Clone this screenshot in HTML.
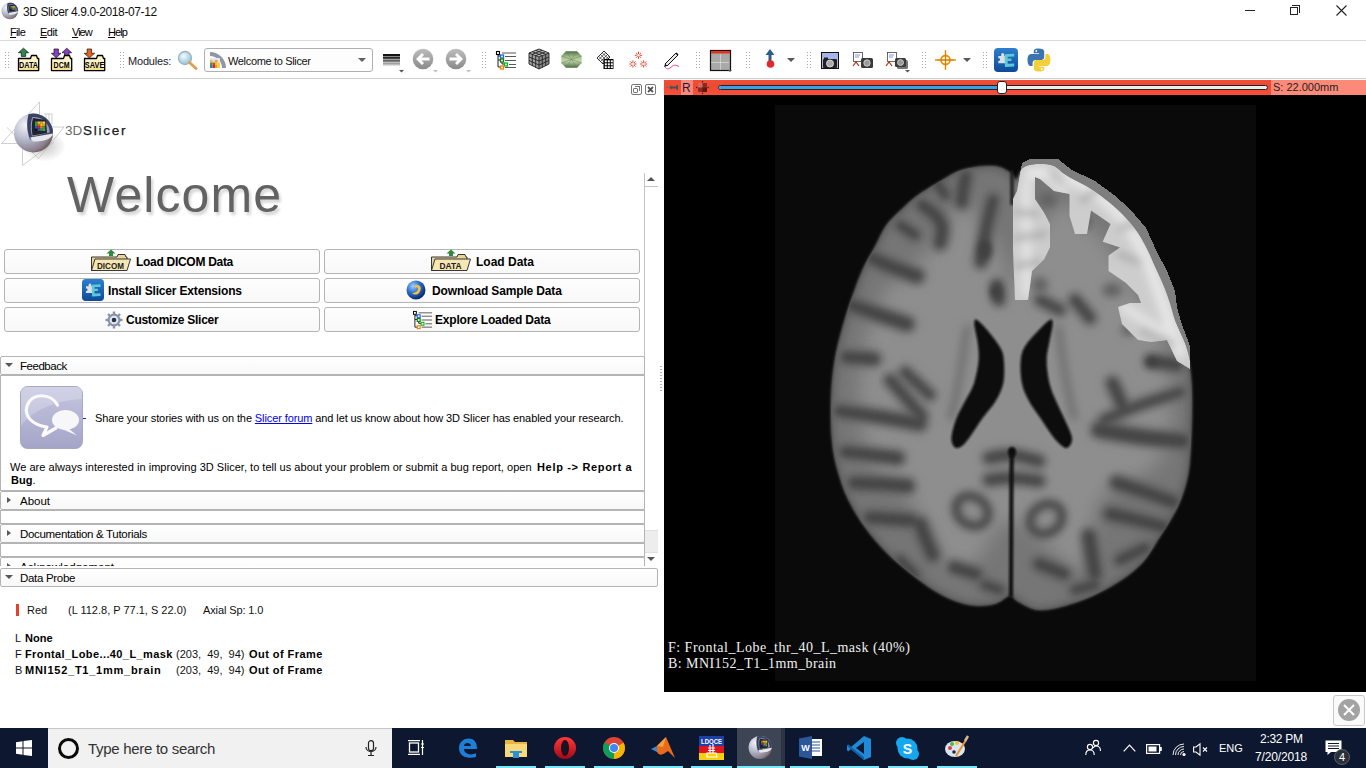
<!DOCTYPE html>
<html><head><meta charset="utf-8">
<style>
*{margin:0;padding:0;box-sizing:border-box}
html,body{width:1366px;height:768px;overflow:hidden;background:#fff;font-family:"Liberation Sans",sans-serif;color:#000;position:relative}
.a{position:absolute}
.t{position:absolute;white-space:nowrap;line-height:1}
svg{position:absolute;overflow:visible}
.hl{position:absolute;height:1px;background:#d9d9d9}
.grip{position:absolute;width:6px;height:18px;background-image:radial-gradient(circle,#a8a8a8 0.65px,transparent 1px);background-size:3px 3px}
.btn{position:absolute;height:25px;border:1px solid #b4b4b4;border-radius:3px;background:linear-gradient(#fefefe,#f8f8f8)}
.bt{position:absolute;white-space:nowrap;line-height:1;font-weight:bold;font-size:12px;top:7px}
.sh{position:absolute;left:0;width:645px;border:1px solid #b4b4b4;border-radius:2px;background:linear-gradient(#fff,#f8f8f8)}
.sb{position:absolute;left:0;width:645px;border:1px solid #b4b4b4;background:#fff}
.st{position:absolute;white-space:nowrap;line-height:1;font-size:11.5px;left:19px}
.tri-d{position:absolute;width:0;height:0;border-left:4px solid transparent;border-right:4px solid transparent;border-top:4px solid #585858}
.tri-r{position:absolute;width:0;height:0;border-top:3px solid transparent;border-bottom:3px solid transparent;border-left:4px solid #585858}
.tb{position:absolute;top:728px;height:40px}
.ul{position:absolute;top:766px;height:2px;background:#7ae6fa}
</style></head>
<body>
<!-- ============ TITLE BAR ============ -->
<svg style="left:1px;top:2px" width="18" height="18" viewBox="0 0 18 18"><use href="#slc" x="0" y="0" width="18" height="18"/></svg>
<div class="t" style="left:23px;top:6px;font-size:12px;color:#111;letter-spacing:-0.4px">3D Slicer 4.9.0-2018-07-12</div>
<div class="t" style="left:10px;top:27px;font-size:11px;letter-spacing:-0.65px"><u>F</u>ile</div>
<div class="t" style="left:40px;top:27px;font-size:11px;letter-spacing:-0.5px"><u>E</u>dit</div>
<div class="t" style="left:72px;top:27px;font-size:11px;letter-spacing:-1px"><u>V</u>iew</div>
<div class="t" style="left:108px;top:27px;font-size:11px;letter-spacing:-0.9px"><u>H</u>elp</div>
<!-- window controls -->
<div class="a" style="left:1245px;top:10px;width:10px;height:1px;background:#222"></div>
<div class="a" style="left:1290px;top:7px;width:8px;height:8px;border:1px solid #222"></div>
<div class="a" style="left:1292px;top:5px;width:8px;height:8px;border-top:1px solid #222;border-right:1px solid #222"></div>
<svg style="left:1336px;top:5px" width="11" height="11" viewBox="0 0 11 11"><path d="M0.5 0.5 L10.5 10.5 M10.5 0.5 L0.5 10.5" stroke="#222" stroke-width="1.1"/></svg>
<div class="hl" style="left:0;top:40px;width:1366px;background:#dadada"></div>

<!-- ============ TOOLBAR ============ -->
<div class="grip" style="left:4px;top:51px"></div>
<!-- DATA icon -->
<svg style="left:17px;top:47px" width="24" height="25" viewBox="0 0 24 25">
 <path d="M6.5 1.2 L11.6 5.7 L8.7 5.7 L8.7 9.4 L4.3 9.4 L4.3 5.7 L1.4 5.7 Z" fill="#2e8a4a" stroke="#111" stroke-width="0.7"/>
 <path d="M1.5 11.5 L13.5 11.5 L14.5 8.5 L19.5 8.5 L20.5 11.5 L21.7 11.5 L21.7 23.5 L1.5 23.5 Z" fill="#fdf3c4" stroke="#000" stroke-width="1.3" stroke-linejoin="round"/><rect x="2.2" y="20" width="18.8" height="2.9" fill="#f3e090"/><text x="11.6" y="21.2" font-family="Liberation Sans" font-size="8.6" font-weight="bold" text-anchor="middle" fill="#000" textLength="19" lengthAdjust="spacingAndGlyphs">DATA</text>
</svg>
<svg style="left:50px;top:47px" width="24" height="25" viewBox="0 0 24 25">
 <path d="M6.2 10.8 L11.0 6.3 L8.4 6.3 L8.4 2.0 L4.0 2.0 L4.0 6.3 L1.4 6.3 Z" fill="#8a3fc0" stroke="#111" stroke-width="0.7"/>
 <path d="M16.8 1.2 L21.6 5.7 L19.0 5.7 L19.0 8.5 L14.6 8.5 L14.6 5.7 L12.0 5.7 Z" fill="#8a3fc0" stroke="#111" stroke-width="0.7"/>
 <path d="M1.5 11.5 L13.5 11.5 L14.5 8.5 L19.5 8.5 L20.5 11.5 L21.7 11.5 L21.7 23.5 L1.5 23.5 Z" fill="#fdf3c4" stroke="#000" stroke-width="1.3" stroke-linejoin="round"/><rect x="2.2" y="20" width="18.8" height="2.9" fill="#f3e090"/><text x="11.6" y="21.2" font-family="Liberation Sans" font-size="8.6" font-weight="bold" text-anchor="middle" fill="#000" textLength="16" lengthAdjust="spacingAndGlyphs">DCM</text>
</svg>
<svg style="left:83px;top:47px" width="24" height="25" viewBox="0 0 24 25">
 <path d="M6.4 10.8 L11.6 6.3 L8.6 6.3 L8.6 2.0 L4.2 2.0 L4.2 6.3 L1.2 6.3 Z" fill="#e8601e" stroke="#111" stroke-width="0.7"/>
 <path d="M1.5 11.5 L13.5 11.5 L14.5 8.5 L19.5 8.5 L20.5 11.5 L21.7 11.5 L21.7 23.5 L1.5 23.5 Z" fill="#fdf3c4" stroke="#000" stroke-width="1.3" stroke-linejoin="round"/><rect x="2.2" y="20" width="18.8" height="2.9" fill="#f3e090"/><text x="11.6" y="21.2" font-family="Liberation Sans" font-size="8.6" font-weight="bold" text-anchor="middle" fill="#000" textLength="19.5" lengthAdjust="spacingAndGlyphs">SAVE</text>
</svg>
<div class="grip" style="left:119px;top:51px"></div>
<div class="t" style="left:128px;top:56px;font-size:11px;color:#1a1a2a;letter-spacing:-0.2px">Modules:</div>
<!-- magnifier -->
<svg style="left:177px;top:50px" width="21" height="20" viewBox="0 0 21 20">
 <defs><radialGradient id="mg" cx="40%" cy="35%" r="60%"><stop offset="0" stop-color="#f4fbff"/><stop offset="1" stop-color="#9cc8dc"/></radialGradient></defs>
 <circle cx="8" cy="8" r="6.5" fill="url(#mg)" stroke="#9ab4c0" stroke-width="1.3"/>
 <path d="M12.5 12.5 L19 18.5" stroke="#e0a050" stroke-width="3" stroke-linecap="round"/>
</svg>
<!-- module combo -->
<div class="a" style="left:204px;top:48px;width:169px;height:24px;border:1px solid #b0b0b0;border-radius:3px;background:#fdfdfd"></div>
<svg style="left:210px;top:52px" width="16" height="16" viewBox="0 0 16 16">
 <path d="M0 0 A16 16 0 0 1 16 16 L12 16 A12 12 0 0 0 0 4 Z" fill="#8e96a8"/>
 <rect x="0" y="6" width="10" height="10" fill="#e8e8e8"/>
 <rect x="0" y="8" width="2.5" height="2.5" fill="#e8c040"/><rect x="2.5" y="8" width="2.5" height="2.5" fill="#d8d8d8"/><rect x="5" y="8" width="2.5" height="2.5" fill="#e8a040"/>
 <rect x="0" y="10.5" width="2.5" height="2.5" fill="#40a040"/><rect x="2.5" y="10.5" width="2.5" height="2.5" fill="#e04030"/><rect x="5" y="10.5" width="2.5" height="2.5" fill="#f0c030"/>
 <rect x="0" y="13" width="2.5" height="3" fill="#3080d0"/><rect x="2.5" y="13" width="2.5" height="3" fill="#d03030"/><rect x="5" y="13" width="2.5" height="3" fill="#e0a020"/><rect x="7.5" y="10.5" width="2.5" height="5.5" fill="#f0d040"/>
</svg>
<div class="t" style="left:228px;top:56px;font-size:11px;color:#111;letter-spacing:-0.34px">Welcome to Slicer</div>
<div class="tri-d" style="left:358px;top:58px;border-left-width:4px;border-right-width:4px;border-top-width:4px;border-top-color:#606060"></div>
<!-- window level -->
<svg style="left:383px;top:54px" width="22" height="19" viewBox="0 0 22 19">
 <rect x="0" y="0" width="17" height="1.5" fill="rgb(20,20,20)"/><rect x="0" y="1" width="17" height="1.5" fill="rgb(20,20,20)"/><rect x="0" y="3" width="17" height="1.5" fill="rgb(40,40,40)"/><rect x="0" y="4" width="17" height="1.5" fill="rgb(70,70,70)"/><rect x="0" y="6" width="17" height="1.5" fill="rgb(100,100,100)"/><rect x="0" y="7" width="17" height="1.5" fill="rgb(130,130,130)"/><rect x="0" y="9" width="17" height="1.5" fill="rgb(160,160,160)"/><rect x="0" y="10" width="17" height="1.5" fill="rgb(190,190,190)"/>
 <path d="M16 16 L21 16 L18.5 18.5 Z" fill="#555"/>
</svg>
<!-- back / forward -->
<svg style="left:412px;top:48px" width="28" height="25" viewBox="0 0 28 25">
 <defs><linearGradient id="cg" x1="0" y1="0" x2="0" y2="1"><stop offset="0" stop-color="#bdbdbd"/><stop offset="1" stop-color="#8a8a8a"/></linearGradient></defs>
 <circle cx="11" cy="11" r="10.3" fill="url(#cg)"/>
 <path d="M4 11 L10 5 L12 7 L9.5 9.5 L17.5 9.5 L17.5 12.5 L9.5 12.5 L12 15 L10 17 Z" fill="#fff"/>
 <path d="M21 22 L26 22 L23.5 24.5 Z" fill="#c0c0c0"/>
</svg>
<svg style="left:445px;top:48px" width="28" height="25" viewBox="0 0 28 25">
 <circle cx="11" cy="11" r="10.3" fill="url(#cg)"/>
 <path d="M18 11 L12 5 L10 7 L12.5 9.5 L4.5 9.5 L4.5 12.5 L12.5 12.5 L10 15 L12 17 Z" fill="#fff"/>
 <path d="M21 22 L26 22 L23.5 24.5 Z" fill="#c0c0c0"/>
</svg>
<div class="grip" style="left:481px;top:51px"></div>
<!-- tree -->
<svg style="left:496px;top:51px" width="21" height="19" viewBox="0 0 21 19">
 <path d="M2 2 L2 16 L4.5 16 M2 5 L4.5 5 M2 9 L4.5 9 M6 9 L6 13 L8.5 13" stroke="#222" stroke-width="1" fill="none"/>
 <rect x="0.5" y="0.5" width="3" height="3" fill="#fff" stroke="#000" stroke-width="1.1"/>
 <rect x="4.5" y="4" width="3" height="3" fill="#fff" stroke="#1a6ae0" stroke-width="1.3"/>
 <rect x="4.5" y="8" width="3" height="3" fill="#fff" stroke="#137a13" stroke-width="1.3"/>
 <rect x="8.5" y="12" width="3" height="3" fill="#fff" stroke="#1bb31b" stroke-width="1.3"/>
 <rect x="4.5" y="15" width="3" height="3" fill="#fff" stroke="#f08010" stroke-width="1.3"/>
 <path d="M6 2 L20 2 M9 5.5 L20 5.5 M9 9.5 L20 9.5 M13 13.5 L20 13.5 M9 16.5 L20 16.5" stroke="#444" stroke-width="0.9"/>
</svg>
<!-- cube -->
<svg style="left:528px;top:48px" width="22" height="22" viewBox="0 0 22 22">
 <path d="M11 1 L21 5 L11 9 L1 5 Z" fill="#b8b8b8"/>
 <path d="M1 5 L11 9 L11 21 L1 16 Z" fill="#a0a0a0"/>
 <path d="M21 5 L11 9 L11 21 L21 16 Z" fill="#8a8a8a"/>
 <path d="M4.3 3.7 L14.3 7.7 M7.7 2.3 L17.7 6.3 M17.7 3.7 L7.7 7.7 M14.3 2.3 L4.3 6.3 M1 9 L11 13 L21 9 M1 12.5 L11 17 L21 12.5 M4.3 6.3 L4.3 18 M7.7 7.7 L7.7 19.5 M14.3 7.7 L14.3 19.5 M17.7 6.3 L17.7 18" stroke="#222" stroke-width="0.9" fill="none"/>
 <path d="M1 5 L11 9 L21 5 M11 9 L11 21 M1 5 L1 16 L11 21 L21 16 L21 5 L11 1 Z" stroke="#222" stroke-width="0.9" fill="none"/>
</svg>
<!-- gem -->
<svg style="left:561px;top:51px" width="21" height="17" viewBox="0 0 21 17">
 <defs><linearGradient id="gm" x1="0" y1="0" x2="0" y2="1"><stop offset="0" stop-color="#4f6e44"/><stop offset="0.35" stop-color="#a8c290"/><stop offset="0.6" stop-color="#c0d6a8"/><stop offset="1" stop-color="#4a6a40"/></linearGradient></defs>
 <path d="M5 0.3 L16 0.3 L20.7 5 L20.7 12 L16 16.7 L5 16.7 L0.3 12 L0.3 5 Z" fill="url(#gm)"/>
 <path d="M5 0.3 L10.5 8.5 L16 0.3 M0.3 5 L10.5 8.5 L20.7 5 M0.3 12 L10.5 8.5 L20.7 12 M5 16.7 L10.5 8.5 L16 16.7" stroke="#6e8a60" stroke-width="0.6" fill="none"/>
</svg>
<!-- grid -->
<svg style="left:596px;top:50px" width="19" height="20" viewBox="0 0 19 20">
 <path d="M1 8 L8 1 L14 7 L7 14 Z" fill="#fff" stroke="#000" stroke-width="0.8"/>
 <path d="M2.7 6.3 L9.7 13.3 M4.5 4.5 L11.5 11.5 M6.2 2.8 L13 9.5 M2.7 9.7 L9.7 2.7 M4.5 11.5 L11.5 4.5 M6.2 13.2 L13 6.2" stroke="#000" stroke-width="0.6"/>
 <rect x="7.5" y="9" width="10" height="10" fill="#000"/>
 <rect x="8.8" y="10.3" width="2" height="2" fill="#fff"/><rect x="11.8" y="10.3" width="2" height="2" fill="#fff"/><rect x="14.8" y="10.3" width="2" height="2" fill="#fff"/>
 <rect x="8.8" y="13.3" width="2" height="2" fill="#fff"/><rect x="11.8" y="13.3" width="2" height="2" fill="#fff"/><rect x="14.8" y="13.3" width="2" height="2" fill="#fff"/>
 <rect x="8.8" y="16.3" width="2" height="1.8" fill="#fff"/><rect x="11.8" y="16.3" width="2" height="1.8" fill="#fff"/><rect x="14.8" y="16.3" width="2" height="1.8" fill="#fff"/>
</svg>
<!-- fiducials -->
<svg style="left:629px;top:51px" width="19" height="18" viewBox="0 0 19 18">
 <g stroke="#e8301a" stroke-width="0.9" stroke-linecap="butt"><path d="M10.70 4.30 L13.10 4.30 M10.35 5.15 L12.05 6.85 M9.50 5.50 L9.50 7.90 M8.65 5.15 L6.95 6.85 M8.30 4.30 L5.90 4.30 M8.65 3.45 L6.95 1.75 M9.50 3.10 L9.50 0.70 M10.35 3.45 L12.05 1.75 M5.10 13.00 L7.50 13.00 M4.75 13.85 L6.45 15.55 M3.90 14.20 L3.90 16.60 M3.05 13.85 L1.35 15.55 M2.70 13.00 L0.30 13.00 M3.05 12.15 L1.35 10.45 M3.90 11.80 L3.90 9.40 M4.75 12.15 L6.45 10.45 M15.80 13.00 L18.20 13.00 M15.45 13.85 L17.15 15.55 M14.60 14.20 L14.60 16.60 M13.75 13.85 L12.05 15.55 M13.40 13.00 L11.00 13.00 M13.75 12.15 L12.05 10.45 M14.60 11.80 L14.60 9.40 M15.45 12.15 L17.15 10.45 "/></g>
</svg>
<!-- pen -->
<svg style="left:663px;top:51px" width="18" height="19" viewBox="0 0 18 19">
 <path d="M2 13 L13 2 L15 4 L4 15 Z" fill="#e8e8e8" stroke="#111" stroke-width="1"/>
 <path d="M13 2 L15 4" stroke="#111" stroke-width="1.6"/>
 <path d="M1 16 L2 13 L4 15 Z" fill="#111"/>
 <path d="M2 16 C4 19 6 18 9 15.5 C11 13.5 13 14 16 15.5" stroke="#e8406a" stroke-width="0.9" fill="none"/>
</svg>
<div class="grip" style="left:695px;top:51px"></div>
<!-- layout -->
<svg style="left:710px;top:50px" width="23" height="22" viewBox="0 0 23 22">
 <rect x="0.5" y="0.5" width="20" height="20" fill="#a9a9a9" stroke="#111" stroke-width="1.2"/>
 <rect x="1" y="1" width="19" height="2.5" fill="#e8301a"/>
 <path d="M10.5 4.5 L10.5 20 M1.5 12.5 L19.5 12.5" stroke="#f4f0d8" stroke-width="1" stroke-dasharray="1 1"/>
 <path d="M18 20 L22 20 L20 22 Z" fill="#555"/>
</svg>
<div class="grip" style="left:745px;top:51px"></div>
<!-- arrow with red dot -->
<svg style="left:765px;top:49px" width="11" height="20" viewBox="0 0 11 20">
 <path d="M5 0 L9.5 6 L6.5 6 L6.5 12 L3.5 12 L3.5 6 L0.5 6 Z" fill="#2d5b8a"/>
 <circle cx="5.5" cy="15" r="3.8" fill="#e02a2a"/>
</svg>
<div class="tri-d" style="left:787px;top:58px"></div>
<div class="grip" style="left:806px;top:51px"></div>
<!-- camera 1 -->
<svg style="left:821px;top:52px" width="18" height="17" viewBox="0 0 18 17">
 <rect x="0.5" y="0.5" width="17" height="16" fill="#a9b4e8" stroke="#111" stroke-width="1"/>
 <rect x="2" y="7" width="14" height="9" rx="1" fill="#222"/>
 <circle cx="9" cy="11.5" r="3.5" fill="#aaa" stroke="#eee" stroke-width="0.8"/>
 <rect x="3" y="5.5" width="4" height="2" fill="#222"/>
</svg>
<!-- camera 2 -->
<svg style="left:851px;top:52px" width="23" height="17" viewBox="0 0 23 17">
 <rect x="2.5" y="0.5" width="9" height="9" fill="#fff" stroke="#444" stroke-width="0.8"/>
 <path d="M4 3 L9 3 M4 5 L8 5" stroke="#6a7ad0" stroke-width="0.8"/>
 <path d="M2 14 L5 10 L8 14" stroke="#b03010" stroke-width="1.2" fill="none"/>
 <rect x="10" y="6" width="12" height="10" rx="1.5" fill="#3a3a3a"/>
 <circle cx="16" cy="11" r="3.2" fill="#999" stroke="#ddd" stroke-width="0.8"/>
</svg>
<!-- camera 3 -->
<svg style="left:885px;top:52px" width="26" height="21" viewBox="0 0 26 21">
 <rect x="2.5" y="0.5" width="9" height="9" fill="#fff" stroke="#444" stroke-width="0.8"/>
 <path d="M4 3 L9 3 M4 5 L8 5" stroke="#6a7ad0" stroke-width="0.8"/>
 <path d="M1 14 L4 10 L7 14" stroke="#b03010" stroke-width="1.2" fill="none"/>
 <rect x="12" y="8" width="11" height="9" rx="1.5" fill="#777"/>
 <rect x="10" y="6" width="11" height="9" rx="1.5" fill="#3a3a3a"/>
 <circle cx="15.5" cy="10.5" r="3" fill="#999" stroke="#ddd" stroke-width="0.8"/>
 <path d="M20 18 L25 18 L22.5 20.5 Z" fill="#555"/>
</svg>
<div class="grip" style="left:921px;top:51px"></div>
<!-- crosshair -->
<svg style="left:935px;top:50px" width="21" height="20" viewBox="0 0 21 20">
 <path d="M10.5 0 L10.5 20 M0 10 L21 10" stroke="#e8900a" stroke-width="1.4"/>
 <circle cx="10.5" cy="10" r="4.5" fill="none" stroke="#e8900a" stroke-width="1.8"/>
 <path d="M10.5 2 L10.5 18 M2 10 L19 10" stroke="#c87008" stroke-width="0.6"/>
</svg>
<div class="tri-d" style="left:963px;top:58px"></div>
<div class="grip" style="left:982px;top:51px"></div>
<!-- extension manager -->
<svg style="left:994px;top:48px" width="24" height="24" viewBox="0 0 24 24">
 <defs><linearGradient id="ex" x1="0" y1="0" x2="0" y2="1"><stop offset="0" stop-color="#2c7fcf"/><stop offset="1" stop-color="#0d4a97"/></linearGradient></defs>
 <rect x="0" y="0" width="24" height="24" rx="4" fill="url(#ex)"/>
 <path d="M4.3 8 L7.3 8 C6.8 6.5 7.5 5 8.7 5 C10 5 10.5 6.5 10 8 L12 8 L12 15.3 L4.3 15.3 L4.3 13 C5.5 13.2 6 12.5 6 11.6 C6 10.7 5.5 10 4.3 10.3 Z" fill="#dcdfe4"/>
 <path d="M10.5 6.2 L20.2 5.8 L20.2 8.6 L13.7 8.8 L13.7 10.6 L17.4 10.6 L17.4 13 L13.7 13 L13.7 15.8 L20.2 15.6 L20.2 18.6 L11 19 Z" fill="#5cc8d8"/>
</svg>
<!-- python -->
<svg style="left:1027px;top:48px" width="24" height="24" viewBox="0 0 24 24">
 <path d="M11.8 0.5 C6.5 0.5 6.8 2.8 6.8 2.8 L6.8 5.3 L12 5.3 L12 6 L4.2 6 C4.2 6 0.5 5.6 0.5 11.9 C0.5 18.2 3.7 18 3.7 18 L5.6 18 L5.6 15.1 C5.6 15.1 5.5 11.9 8.8 11.9 L14.1 11.9 C14.1 11.9 17.2 12 17.2 8.9 L17.2 3.8 C17.2 3.8 17.7 0.5 11.8 0.5 Z" fill="#3a75b0"/>
 <path d="M12.2 23.5 C17.5 23.5 17.2 21.2 17.2 21.2 L17.2 18.7 L12 18.7 L12 18 L19.8 18 C19.8 18 23.5 18.4 23.5 12.1 C23.5 5.8 20.3 6 20.3 6 L18.4 6 L18.4 8.9 C18.4 8.9 18.5 12.1 15.2 12.1 L9.9 12.1 C9.9 12.1 6.8 12 6.8 15.1 L6.8 20.2 C6.8 20.2 6.3 23.5 12.2 23.5 Z" fill="#f5cf3a"/>
 <circle cx="9.3" cy="3" r="0.9" fill="#fff"/><circle cx="14.7" cy="21" r="0.9" fill="#fff"/>
</svg>

<div class="hl" style="left:0;top:78px;width:1366px;background:#cfcfcf"></div>

<!-- ============ LEFT PANEL ============ -->
<!-- float/close -->
<div class="a" style="left:631px;top:84px;width:11px;height:11px;border:1px solid #777;border-radius:2px"></div>
<div class="a" style="left:633px;top:88px;width:5px;height:5px;border:1px solid #777;border-radius:1px"></div>
<div class="a" style="left:635px;top:86px;width:5px;height:5px;border-top:1px solid #777;border-right:1px solid #777"></div>
<div class="a" style="left:645px;top:84px;width:11px;height:11px;border:1px solid #777;border-radius:2px"></div>
<svg style="left:645px;top:84px" width="11" height="11" viewBox="0 0 11 11"><path d="M3 3 L8 8 M8 3 L3 8" stroke="#555" stroke-width="1.8"/></svg>
<!-- logo -->
<svg style="left:0;top:0" width="0" height="0">
 <defs>
  <radialGradient id="lg1" cx="30%" cy="30%" r="85%"><stop offset="0" stop-color="#f4f4f8"/><stop offset="0.45" stop-color="#b4b6cc"/><stop offset="0.8" stop-color="#8a7e8a"/><stop offset="1" stop-color="#5a3a36"/></radialGradient>
  <radialGradient id="lgs" cx="50%" cy="50%" r="50%"><stop offset="0" stop-color="#000" stop-opacity="0.22"/><stop offset="1" stop-color="#000" stop-opacity="0"/></radialGradient>
  <symbol id="slc" viewBox="13 112 42 42">
   <circle cx="33.5" cy="133" r="19.5" fill="url(#lg1)"/>
   <path d="M28.5 114.2 A19.5 19.5 0 0 1 53 133.5 L30 139.5 C26.5 131 26.5 122 28.5 114.2 Z" fill="#3c4164"/>
   <path d="M32.5 117 A16 16 0 0 1 49.8 132.5 L32 136.5 C30.3 129 30.3 122 32.5 117 Z" fill="#9aa0b8"/>
   <path d="M33 118 L46 120 L47 133 L32.5 135.5 C31.5 129 31.5 123 33 118 Z" fill="#20242e"/>
   <path d="M30 137.5 L53 133.5 C51.5 139 45 141.5 33 141.5 Z" fill="#e6e8ee"/>
   <rect x="35" y="121.5" width="2.6" height="2.4" fill="#38a040"/><rect x="37.6" y="121.5" width="2.6" height="2.4" fill="#f0c020"/><rect x="40.2" y="121.5" width="2.6" height="2.4" fill="#e8b030"/><rect x="42.8" y="121.5" width="2.4" height="2.4" fill="#e8d060"/>
   <rect x="35" y="123.9" width="2.6" height="2.4" fill="#30a040"/><rect x="37.6" y="123.9" width="2.6" height="2.4" fill="#e85020"/><rect x="40.2" y="123.9" width="2.6" height="2.4" fill="#f0c020"/><rect x="42.8" y="123.9" width="2.4" height="2.4" fill="#e89020"/>
   <rect x="35" y="126.3" width="2.6" height="2.4" fill="#2060d0"/><rect x="37.6" y="126.3" width="2.6" height="2.4" fill="#e02020"/><rect x="40.2" y="126.3" width="2.6" height="2.4" fill="#f08020"/><rect x="42.8" y="126.3" width="2.4" height="2.4" fill="#30a040"/>
   <rect x="35" y="128.7" width="2.6" height="2.2" fill="#111"/><rect x="37.6" y="128.7" width="2.6" height="2.2" fill="#1a5ad0"/><rect x="40.2" y="128.7" width="2.6" height="2.2" fill="#30a040"/><rect x="42.8" y="128.7" width="2.4" height="2.2" fill="#40b050"/>
  </symbol>
 </defs>
</svg>
<svg style="left:0px;top:98px" width="70" height="72" viewBox="0 98 70 72">
 <ellipse cx="44" cy="146" rx="22" ry="16" fill="url(#lgs)"/>
 <g stroke="#b0b0b0" stroke-width="0.6" fill="none">
  <path d="M1.5 143.5 L39.5 102 L39.5 117 M7 127.5 L38.5 158.5 L64 127 L52 127 M1.5 143.5 L18 143.5 M22.5 137 L22.5 165.5 L54 142 M44 114 L52 114 L52 124 M46 114 L46 122 M49 114 L49 122"/>
 </g>
 <use href="#slc" x="13" y="112" width="42" height="42"/>
</svg>
<div class="t" style="left:65px;top:124px;font-size:13.5px;color:#6a6a6a;letter-spacing:0px">3D</div><div class="t" style="left:83px;top:124px;font-size:13.5px;color:#1a1a1a;letter-spacing:1.75px;-webkit-text-stroke:0.25px #1a1a1a">Slicer</div>
<div class="t" style="left:67px;top:170px;font-size:50px;letter-spacing:1.1px;color:#626262;text-shadow:2px 3px 3px rgba(0,0,0,0.18)">Welcome</div>

<!-- scrollbar -->
<div class="a" style="left:660px;top:365px;width:2px;height:26px;background-image:radial-gradient(circle,#b0b0b0 0.6px,transparent 0.9px);background-size:2px 3px"></div>
<div class="a" style="left:644px;top:173px;width:1px;height:393px;background:#c4c4c4"></div>
<div class="a" style="left:644px;top:186px;width:14px;height:1px;background:#c4c4c4"></div>
<div class="a" style="left:647px;top:177px;width:0;height:0;border-left:4px solid transparent;border-right:4px solid transparent;border-bottom:4px solid #555"></div>
<div class="a" style="left:645px;top:530px;width:13px;height:23px;background:#ededed;border-top:1px solid #e0e0e0;border-bottom:1px solid #e0e0e0"></div>
<div class="tri-d" style="left:647px;top:557px"></div>

<!-- buttons -->
<div class="btn" style="left:4px;top:249px;width:316px"></div>
<div class="btn" style="left:324px;top:249px;width:316px"></div>
<div class="btn" style="left:4px;top:278px;width:316px"></div>
<div class="btn" style="left:324px;top:278px;width:316px"></div>
<div class="btn" style="left:4px;top:307px;width:316px"></div>
<div class="btn" style="left:324px;top:307px;width:316px"></div>
<!-- dicom icon -->
<svg style="left:90px;top:249px" width="42" height="22" viewBox="0 0 42 22">
 <path d="M21 0.5 L25.5 4.5 L23 4.5 L23 7 L19 7 L19 4.5 L16.5 4.5 Z" fill="#2f8a3e"/>
 <path d="M1.5 21.5 L1.5 8 L27 8 L28 5.5 L35 5.5 L36 8 L37 8 L37 18 Z" fill="#e8d49a" stroke="#222" stroke-width="0.9"/>
 <path d="M5 10 L40.5 10 L37 21.5 L1.5 21.5 Z" fill="#f6e6b4" stroke="#222" stroke-width="0.9"/>
 <text x="20.5" y="19.5" font-family="Liberation Sans" font-size="8.5" font-weight="bold" text-anchor="middle" fill="#222" textLength="27" lengthAdjust="spacingAndGlyphs">DICOM</text>
</svg>
<div class="bt" style="left:136px;top:256px;letter-spacing:-0.29px">Load DICOM Data</div>
<svg style="left:430px;top:249px" width="42" height="22" viewBox="0 0 42 22">
 <path d="M21 0.5 L25.5 4.5 L23 4.5 L23 7 L19 7 L19 4.5 L16.5 4.5 Z" fill="#2f8a3e"/>
 <path d="M1.5 21.5 L1.5 8 L27 8 L28 5.5 L35 5.5 L36 8 L37 8 L37 18 Z" fill="#e8d49a" stroke="#222" stroke-width="0.9"/>
 <path d="M5 10 L40.5 10 L37 21.5 L1.5 21.5 Z" fill="#f6e6b4" stroke="#222" stroke-width="0.9"/>
 <text x="20.5" y="19.5" font-family="Liberation Sans" font-size="8.5" font-weight="bold" text-anchor="middle" fill="#222" textLength="22" lengthAdjust="spacingAndGlyphs">DATA</text>
</svg>
<div class="bt" style="left:476px;top:256px">Load Data</div>
<!-- extension icon -->
<svg style="left:82px;top:279px" width="22" height="22" viewBox="0 0 24 24">
 <rect x="0" y="0" width="24" height="24" rx="4" fill="url(#ex)"/>
 <path d="M4.3 8 L7.3 8 C6.8 6.5 7.5 5 8.7 5 C10 5 10.5 6.5 10 8 L12 8 L12 15.3 L4.3 15.3 L4.3 13 C5.5 13.2 6 12.5 6 11.6 C6 10.7 5.5 10 4.3 10.3 Z" fill="#dcdfe4"/>
 <path d="M10.5 6.2 L20.2 5.8 L20.2 8.6 L13.7 8.8 L13.7 10.6 L17.4 10.6 L17.4 13 L13.7 13 L13.7 15.8 L20.2 15.6 L20.2 18.6 L11 19 Z" fill="#5cc8d8"/>
</svg>
<div class="bt" style="left:108px;top:285px;letter-spacing:-0.17px">Install Slicer Extensions</div>
<!-- globe -->
<svg style="left:406px;top:280px" width="20" height="20" viewBox="0 0 20 20">
 <defs><radialGradient id="gl" cx="35%" cy="30%" r="70%"><stop offset="0" stop-color="#9ad0ff"/><stop offset="0.5" stop-color="#2f6fd0"/><stop offset="1" stop-color="#0a2a70"/></radialGradient></defs>
 <circle cx="10" cy="10" r="9.5" fill="url(#gl)"/>
 <path d="M9 5 C14 4 17 8 13 13 C11 15 8 15 6 13 C9 13 12 11 12 9 C12 7 10 7 9 8 Z" fill="#f0c040"/>
</svg>
<div class="bt" style="left:432px;top:285px;letter-spacing:-0.15px">Download Sample Data</div>
<!-- gear -->
<svg style="left:105px;top:311px" width="18" height="18" viewBox="0 0 18 18">
 <g fill="#8a93a8"><circle cx="9" cy="9" r="6.5"/>
 <rect x="7.8" y="0.5" width="2.4" height="17"/><rect x="0.5" y="7.8" width="17" height="2.4"/>
 <rect x="7.8" y="0.5" width="2.4" height="17" transform="rotate(45 9 9)"/><rect x="7.8" y="0.5" width="2.4" height="17" transform="rotate(-45 9 9)"/></g>
 <circle cx="9" cy="9" r="4.3" fill="#e4e8f0"/><circle cx="9" cy="9" r="2.3" fill="#2a3040"/>
</svg>
<div class="bt" style="left:126px;top:314px;letter-spacing:-0.27px">Customize Slicer</div>
<!-- tree small -->
<svg style="left:413px;top:310px" width="20" height="20" viewBox="0 0 21 19">
 <path d="M2 2 L2 17 L4.5 17 M2 5 L4.5 5 M2 9 L4.5 9 M6 9 L6 13 L8.5 13" stroke="#222" stroke-width="1" fill="none"/>
 <rect x="0.5" y="0.5" width="3" height="3" fill="#fff" stroke="#000" stroke-width="1"/>
 <rect x="4.5" y="4" width="3" height="3" fill="#fff" stroke="#1a6ae0" stroke-width="1.2"/>
 <rect x="4.5" y="8" width="3" height="3" fill="#fff" stroke="#137a13" stroke-width="1.2"/>
 <rect x="8.5" y="12" width="3" height="3" fill="#fff" stroke="#1bb31b" stroke-width="1.2"/>
 <rect x="4.5" y="15.5" width="3" height="3" fill="#fff" stroke="#f08010" stroke-width="1.2"/>
 <path d="M6 2 L20 2 M9 5.5 L20 5.5 M9 9.5 L20 9.5 M13 13.5 L20 13.5 M9 17 L20 17" stroke="#444" stroke-width="0.9"/>
</svg>
<div class="bt" style="left:435px;top:314px;letter-spacing:-0.2px">Explore Loaded Data</div>

<!-- Feedback section -->
<div class="sh" style="top:356px;height:19px"></div>
<div class="tri-d" style="left:5px;top:363px"></div>
<div class="st" style="left:20px;top:361px;letter-spacing:-0.47px">Feedback</div>
<div class="sb" style="top:375px;height:116px"></div>
<svg style="left:20px;top:386px" width="63" height="63" viewBox="0 0 63 63">
 <defs><linearGradient id="fb" x1="0" y1="0" x2="0" y2="1"><stop offset="0" stop-color="#c6c6e0"/><stop offset="1" stop-color="#a4a4c8"/></linearGradient></defs>
 <rect x="0.5" y="0.5" width="62" height="62" rx="7" fill="url(#fb)" stroke="#9a9abc" stroke-width="0.8"/>
 <path d="M1 40 C12 25 35 14 62 13 L62 1 L1 1 Z" fill="#fff" opacity="0.22"/>
 <path d="M37.5 19 C31 7 12 6 7 20 C4 30 12 39 27 41 L23 49.5 L36 42" fill="none" stroke="#fafafa" stroke-width="3.2" stroke-linejoin="round" stroke-linecap="round"/>
 <ellipse cx="45.5" cy="34" rx="13.5" ry="10" fill="#f7f7fa"/>
 <path d="M48 42 L57 49.5 L42 43 Z" fill="#f7f7fa"/>
</svg>
<div class="a" style="left:83px;top:418px;width:3px;height:1px;background:#1a1aff"></div>
<div class="t" style="left:95px;top:413px;font-size:11px;color:#000;letter-spacing:-0.1px">Share your stories with us on the <span style="color:#0000ee;text-decoration:underline">Slicer forum</span> and let us know about how 3D Slicer has enabled your research.</div>
<div class="t" style="left:10px;top:461.5px;font-size:11px;color:#000;letter-spacing:0.025px">We are always interested in improving 3D Slicer, to tell us about your problem or submit a bug report, open</div>
<div class="t" style="left:537px;top:461.5px;font-size:11px;color:#000;font-weight:bold;letter-spacing:0.67px">Help -&gt; Report a</div>
<div class="t" style="left:11px;top:475px;font-size:11px;color:#000"><b>Bug</b>.</div>

<!-- About -->
<div class="sh" style="top:491px;height:19px"></div>
<div class="tri-r" style="left:7px;top:497px"></div>
<div class="st" style="left:20px;top:496px">About</div>
<div class="sb" style="top:510px;height:14px"></div>
<div class="sh" style="top:524px;height:19px"></div>
<div class="tri-r" style="left:7px;top:530px"></div>
<div class="st" style="left:20px;top:529px;letter-spacing:-0.32px">Documentation &amp; Tutorials</div>
<div class="sb" style="top:543px;height:14px"></div>
<div class="a" style="left:0;top:557px;width:645px;height:9px;overflow:hidden">
  <div class="sh" style="top:0;height:19px"></div>
  <div class="tri-r" style="left:7px;top:6px"></div>
  <div class="st" style="left:20px;top:5px">Acknowledgement</div>
</div>
<!-- Data probe -->
<div class="sh" style="top:568px;height:19px;width:658px"></div>
<div class="tri-d" style="left:5px;top:575px"></div>
<div class="st" style="left:20px;top:573px;letter-spacing:-0.31px">Data Probe</div>
<div class="a" style="left:16px;top:604px;width:3px;height:12px;background:#e8402a"></div>
<div class="t" style="left:27px;top:605px;font-size:11px;color:#111">Red</div>
<div class="t" style="left:68px;top:605px;font-size:11px;color:#111">(L 112.8, P 77.1, S 22.0)</div>
<div class="t" style="left:203px;top:605px;font-size:11px;color:#111;letter-spacing:-0.12px">Axial Sp: 1.0</div>
<div class="t" style="left:15px;top:633px;font-size:11px;color:#111">L</div>
<div class="t" style="left:25px;top:633px;font-size:11px;font-weight:bold">None</div>
<div class="t" style="left:15px;top:649px;font-size:11px;color:#111">F</div>
<div class="t" style="left:25px;top:649px;font-size:11px;font-weight:bold;letter-spacing:0.4px">Frontal_Lobe...40_L_mask</div>
<div class="t" style="left:176px;top:649px;font-size:11px;color:#111">(203,&nbsp; 49,&nbsp; 94)</div>
<div class="t" style="left:249px;top:649px;font-size:11px;font-weight:bold;letter-spacing:0.45px">Out of Frame</div>
<div class="t" style="left:15px;top:665px;font-size:11px;color:#111">B</div>
<div class="t" style="left:25px;top:665px;font-size:11px;font-weight:bold;letter-spacing:0.75px">MNI152_T1_1mm_brain</div>
<div class="t" style="left:176px;top:665px;font-size:11px;color:#111">(203,&nbsp; 49,&nbsp; 94)</div>
<div class="t" style="left:249px;top:665px;font-size:11px;font-weight:bold;letter-spacing:0.45px">Out of Frame</div>


<!-- ============ VIEW ============ -->
<div class="a" style="left:664px;top:80px;width:702px;height:15px;background:linear-gradient(#f54c36,#ea4a33 40%,#fb4f3a)"></div>
<div class="a" style="left:681px;top:80px;width:12px;height:15px;background:#fd8a78"></div>
<div class="a" style="left:1271px;top:80px;width:95px;height:15px;background:#fd8a78"></div>
<!-- pin -->
<svg style="left:665px;top:83px" width="15" height="9" viewBox="0 0 15 9"><path d="M1 4.5 L6 4.5" stroke="#6a6a6a" stroke-width="0.8"/><path d="M5 2.5 L7 3.5 L11 3.5 L12 2 L13 2 L13 7 L12 7 L11 5.5 L7 5.5 L5 6.5 Z" fill="#4a5058"/></svg>
<div class="t" style="left:682px;top:82px;font-size:12px;color:#1a1a40">R</div>
<!-- slice icon -->
<svg style="left:696px;top:81px" width="13" height="13" viewBox="0 0 13 13">
 <rect x="2" y="2" width="9" height="9" fill="#8a2a20"/>
 <rect x="2" y="2" width="4.5" height="4.5" fill="#d86a5a"/><rect x="6.5" y="6.5" width="4.5" height="4.5" fill="#5a1a10"/>
 <circle cx="6.5" cy="0.8" r="0.7" fill="#222"/><circle cx="6.5" cy="12.2" r="0.7" fill="#222"/><circle cx="0.8" cy="6.5" r="0.7" fill="#222"/><circle cx="12.2" cy="6.5" r="0.7" fill="#222"/>
</svg>
<!-- slider -->
<div class="a" style="left:718px;top:85px;width:550px;height:5px;border-radius:3px;background:#ececec;border:1px solid #222"></div>
<div class="a" style="left:719px;top:86px;width:281px;height:3px;border-radius:2px;background:#3aa0e8"></div>
<div class="a" style="left:997px;top:81px;width:10px;height:13px;border-radius:3px;background:#fff;border:1px solid #222"></div>
<div class="t" style="left:1273px;top:82px;font-size:11px;color:#222">S: 22.000mm</div>
<!-- black views -->
<div class="a" style="left:664px;top:95px;width:702px;height:597px;background:#000"></div>
<div class="a" style="left:775px;top:105px;width:481px;height:576px;background:#0a0a0a"></div>
<!--BRAIN--><svg style="left:775px;top:105px" width="481" height="576" viewBox="775 105 481 576">
<defs>
<filter id="f15" x="775" y="105" width="481" height="576" filterUnits="userSpaceOnUse"><feGaussianBlur stdDeviation="1.5"/></filter>
<filter id="f1" x="775" y="105" width="481" height="576" filterUnits="userSpaceOnUse"><feGaussianBlur stdDeviation="1"/></filter>
<filter id="f25" x="775" y="105" width="481" height="576" filterUnits="userSpaceOnUse"><feGaussianBlur stdDeviation="3"/></filter>
<filter id="f4" x="775" y="105" width="481" height="576" filterUnits="userSpaceOnUse"><feGaussianBlur stdDeviation="4"/></filter>
<filter id="f9" x="775" y="105" width="481" height="576" filterUnits="userSpaceOnUse"><feGaussianBlur stdDeviation="9"/></filter>
<clipPath id="bc"><path d="M1011.0 173.0 C1007.2 170.7 1001.2 166.5 993.0 166.0 C984.8 165.5 971.5 167.0 962.0 170.0 C952.5 173.0 943.5 179.7 936.0 184.0 C928.5 188.3 923.0 191.5 917.0 196.0 C911.0 200.5 905.2 206.0 900.0 211.0 C894.8 216.0 890.2 220.0 886.0 226.0 C881.8 232.0 878.8 239.8 875.0 247.0 C871.2 254.2 866.7 261.0 863.0 269.0 C859.3 277.0 856.2 285.8 853.0 295.0 C849.8 304.2 846.3 314.2 843.5 324.0 C840.7 333.8 837.9 344.2 836.0 354.0 C834.1 363.8 832.8 373.3 832.0 383.0 C831.2 392.7 831.0 402.5 831.0 412.0 C831.0 421.5 831.0 430.7 832.0 440.0 C833.0 449.3 834.3 458.2 837.0 468.0 C839.7 477.8 843.3 489.2 848.0 499.0 C852.7 508.8 858.7 518.2 865.0 527.0 C871.3 535.8 877.8 543.8 886.0 552.0 C894.2 560.2 904.7 568.8 914.0 576.0 C923.3 583.2 932.7 590.2 942.0 595.0 C951.3 599.8 961.3 603.5 970.0 605.0 C978.7 606.5 987.7 605.5 994.0 604.0 C1000.3 602.5 1005.0 597.3 1008.0 596.0 C1011.0 594.7 1010.2 595.0 1012.0 596.0 C1013.8 597.0 1014.3 599.7 1019.0 602.0 C1023.7 604.3 1030.8 609.8 1040.0 610.0 C1049.2 610.2 1062.3 606.8 1074.0 603.0 C1085.7 599.2 1099.0 593.3 1110.0 587.0 C1121.0 580.7 1131.8 573.2 1140.0 565.0 C1148.2 556.8 1152.7 547.8 1159.0 538.0 C1165.3 528.2 1173.2 516.5 1178.0 506.0 C1182.8 495.5 1185.8 486.0 1188.0 475.0 C1190.2 464.0 1190.3 452.5 1191.0 440.0 C1191.7 427.5 1192.2 411.8 1192.0 400.0 C1191.8 388.2 1191.3 378.2 1190.0 369.0 C1188.7 359.8 1186.7 352.8 1184.0 345.0 C1181.3 337.2 1176.5 328.7 1174.0 322.0 C1171.5 315.3 1170.8 310.7 1169.0 305.0 C1167.2 299.3 1165.5 294.2 1163.0 288.0 C1160.5 281.8 1157.0 274.7 1154.0 268.0 C1151.0 261.3 1148.3 254.3 1145.0 248.0 C1141.7 241.7 1138.2 235.7 1134.0 230.0 C1129.8 224.3 1124.8 218.8 1120.0 214.0 C1115.2 209.2 1110.3 205.2 1105.0 201.0 C1099.7 196.8 1094.5 193.0 1088.0 189.0 C1081.5 185.0 1072.0 180.7 1066.0 177.0 C1060.0 173.3 1057.5 168.8 1052.0 167.0 C1046.5 165.2 1038.0 165.5 1033.0 166.0 C1028.0 166.5 1024.8 167.7 1022.0 170.0 C1019.2 172.3 1017.8 179.5 1016.0 180.0 C1014.2 180.5 1014.8 175.3 1011.0 173.0 Z"/></clipPath>
<clipPath id="mc"><path d="M1022.0 163.0 L1030.0 159.0 L1058.0 159.0 L1071.0 169.5 L1095.0 181.0 L1114.0 195.0 L1130.0 209.0 L1146.0 228.0 L1157.0 252.0 L1167.0 271.0 L1175.0 291.0 L1177.0 307.0 L1181.0 322.0 L1190.0 346.0 L1190.0 369.0 L1177.0 361.0 L1167.0 340.0 L1151.0 342.0 L1138.0 340.0 L1122.0 324.0 L1118.0 307.0 L1130.0 303.0 L1141.0 303.0 L1138.0 295.0 L1126.0 283.0 L1108.5 271.0 L1108.5 255.5 L1120.0 247.6 L1102.7 241.8 L1110.5 224.0 L1102.7 218.4 L1091.0 210.5 L1087.0 234.0 L1075.0 234.0 L1069.5 216.0 L1069.5 194.0 L1054.0 191.0 L1040.0 179.0 L1035.0 177.0 L1035.0 199.0 L1044.0 212.5 L1050.0 224.0 L1050.0 247.6 L1044.0 259.4 L1032.0 271.0 L1028.0 300.0 L1015.0 300.0 L1013.0 250.0 L1013.0 199.0 L1017.0 191.0 Z"/></clipPath>
</defs>
<path d="M1011.0 173.0 C1007.2 170.7 1001.2 166.5 993.0 166.0 C984.8 165.5 971.5 167.0 962.0 170.0 C952.5 173.0 943.5 179.7 936.0 184.0 C928.5 188.3 923.0 191.5 917.0 196.0 C911.0 200.5 905.2 206.0 900.0 211.0 C894.8 216.0 890.2 220.0 886.0 226.0 C881.8 232.0 878.8 239.8 875.0 247.0 C871.2 254.2 866.7 261.0 863.0 269.0 C859.3 277.0 856.2 285.8 853.0 295.0 C849.8 304.2 846.3 314.2 843.5 324.0 C840.7 333.8 837.9 344.2 836.0 354.0 C834.1 363.8 832.8 373.3 832.0 383.0 C831.2 392.7 831.0 402.5 831.0 412.0 C831.0 421.5 831.0 430.7 832.0 440.0 C833.0 449.3 834.3 458.2 837.0 468.0 C839.7 477.8 843.3 489.2 848.0 499.0 C852.7 508.8 858.7 518.2 865.0 527.0 C871.3 535.8 877.8 543.8 886.0 552.0 C894.2 560.2 904.7 568.8 914.0 576.0 C923.3 583.2 932.7 590.2 942.0 595.0 C951.3 599.8 961.3 603.5 970.0 605.0 C978.7 606.5 987.7 605.5 994.0 604.0 C1000.3 602.5 1005.0 597.3 1008.0 596.0 C1011.0 594.7 1010.2 595.0 1012.0 596.0 C1013.8 597.0 1014.3 599.7 1019.0 602.0 C1023.7 604.3 1030.8 609.8 1040.0 610.0 C1049.2 610.2 1062.3 606.8 1074.0 603.0 C1085.7 599.2 1099.0 593.3 1110.0 587.0 C1121.0 580.7 1131.8 573.2 1140.0 565.0 C1148.2 556.8 1152.7 547.8 1159.0 538.0 C1165.3 528.2 1173.2 516.5 1178.0 506.0 C1182.8 495.5 1185.8 486.0 1188.0 475.0 C1190.2 464.0 1190.3 452.5 1191.0 440.0 C1191.7 427.5 1192.2 411.8 1192.0 400.0 C1191.8 388.2 1191.3 378.2 1190.0 369.0 C1188.7 359.8 1186.7 352.8 1184.0 345.0 C1181.3 337.2 1176.5 328.7 1174.0 322.0 C1171.5 315.3 1170.8 310.7 1169.0 305.0 C1167.2 299.3 1165.5 294.2 1163.0 288.0 C1160.5 281.8 1157.0 274.7 1154.0 268.0 C1151.0 261.3 1148.3 254.3 1145.0 248.0 C1141.7 241.7 1138.2 235.7 1134.0 230.0 C1129.8 224.3 1124.8 218.8 1120.0 214.0 C1115.2 209.2 1110.3 205.2 1105.0 201.0 C1099.7 196.8 1094.5 193.0 1088.0 189.0 C1081.5 185.0 1072.0 180.7 1066.0 177.0 C1060.0 173.3 1057.5 168.8 1052.0 167.0 C1046.5 165.2 1038.0 165.5 1033.0 166.0 C1028.0 166.5 1024.8 167.7 1022.0 170.0 C1019.2 172.3 1017.8 179.5 1016.0 180.0 C1014.2 180.5 1014.8 175.3 1011.0 173.0 Z" fill="#767676" filter="url(#f15)"/>
<g clip-path="url(#bc)">
<path d="M962.0 200.0 C969.5 194.2 968.7 206.7 975.0 215.0 C981.3 223.3 994.0 237.5 1000.0 250.0 C1006.0 262.5 1006.0 290.0 1011.0 290.0 C1016.0 290.0 1021.8 264.2 1030.0 250.0 C1038.2 235.8 1050.0 209.2 1060.0 205.0 C1070.0 200.8 1078.3 212.5 1090.0 225.0 C1101.7 237.5 1117.5 259.2 1130.0 280.0 C1142.5 300.8 1158.3 325.0 1165.0 350.0 C1171.7 375.0 1172.5 410.0 1170.0 430.0 C1167.5 450.0 1161.7 458.3 1150.0 470.0 C1138.3 481.7 1111.7 483.3 1100.0 500.0 C1088.3 516.7 1094.8 566.7 1080.0 570.0 C1065.2 573.3 1031.0 519.2 1011.0 520.0 C991.0 520.8 976.8 578.3 960.0 575.0 C943.2 571.7 925.0 519.2 910.0 500.0 C895.0 480.8 878.3 480.0 870.0 460.0 C861.7 440.0 858.3 406.7 860.0 380.0 C861.7 353.3 868.3 321.7 880.0 300.0 C891.7 278.3 916.3 266.7 930.0 250.0 C943.7 233.3 954.5 205.8 962.0 200.0 Z" fill="#8e8e8e" filter="url(#f9)"/>
<path d="M1011.0 173.0 C1007.2 170.7 1001.2 166.5 993.0 166.0 C984.8 165.5 971.5 167.0 962.0 170.0 C952.5 173.0 943.5 179.7 936.0 184.0 C928.5 188.3 923.0 191.5 917.0 196.0 C911.0 200.5 905.2 206.0 900.0 211.0 C894.8 216.0 890.2 220.0 886.0 226.0 C881.8 232.0 878.8 239.8 875.0 247.0 C871.2 254.2 866.7 261.0 863.0 269.0 C859.3 277.0 856.2 285.8 853.0 295.0 C849.8 304.2 846.3 314.2 843.5 324.0 C840.7 333.8 837.9 344.2 836.0 354.0 C834.1 363.8 832.8 373.3 832.0 383.0 C831.2 392.7 831.0 402.5 831.0 412.0 C831.0 421.5 831.0 430.7 832.0 440.0 C833.0 449.3 834.3 458.2 837.0 468.0 C839.7 477.8 843.3 489.2 848.0 499.0 C852.7 508.8 858.7 518.2 865.0 527.0 C871.3 535.8 877.8 543.8 886.0 552.0 C894.2 560.2 904.7 568.8 914.0 576.0 C923.3 583.2 932.7 590.2 942.0 595.0 C951.3 599.8 961.3 603.5 970.0 605.0 C978.7 606.5 987.7 605.5 994.0 604.0 C1000.3 602.5 1005.0 597.3 1008.0 596.0 C1011.0 594.7 1010.2 595.0 1012.0 596.0 C1013.8 597.0 1014.3 599.7 1019.0 602.0 C1023.7 604.3 1030.8 609.8 1040.0 610.0 C1049.2 610.2 1062.3 606.8 1074.0 603.0 C1085.7 599.2 1099.0 593.3 1110.0 587.0 C1121.0 580.7 1131.8 573.2 1140.0 565.0 C1148.2 556.8 1152.7 547.8 1159.0 538.0 C1165.3 528.2 1173.2 516.5 1178.0 506.0 C1182.8 495.5 1185.8 486.0 1188.0 475.0 C1190.2 464.0 1190.3 452.5 1191.0 440.0 C1191.7 427.5 1192.2 411.8 1192.0 400.0 C1191.8 388.2 1191.3 378.2 1190.0 369.0 C1188.7 359.8 1186.7 352.8 1184.0 345.0 C1181.3 337.2 1176.5 328.7 1174.0 322.0 C1171.5 315.3 1170.8 310.7 1169.0 305.0 C1167.2 299.3 1165.5 294.2 1163.0 288.0 C1160.5 281.8 1157.0 274.7 1154.0 268.0 C1151.0 261.3 1148.3 254.3 1145.0 248.0 C1141.7 241.7 1138.2 235.7 1134.0 230.0 C1129.8 224.3 1124.8 218.8 1120.0 214.0 C1115.2 209.2 1110.3 205.2 1105.0 201.0 C1099.7 196.8 1094.5 193.0 1088.0 189.0 C1081.5 185.0 1072.0 180.7 1066.0 177.0 C1060.0 173.3 1057.5 168.8 1052.0 167.0 C1046.5 165.2 1038.0 165.5 1033.0 166.0 C1028.0 166.5 1024.8 167.7 1022.0 170.0 C1019.2 172.3 1017.8 179.5 1016.0 180.0 C1014.2 180.5 1014.8 175.3 1011.0 173.0 Z" fill="none" stroke="#5a5a5a" stroke-width="6" filter="url(#f4)"/>
<g filter="url(#f4)" stroke="#626262" stroke-linecap="round" stroke-linejoin="round" fill="none">
<path d="M965.6 176.0 C965.2 178.3 963.6 185.7 963.0 190.0 C962.4 194.3 961.9 200.0 961.7 202.0 " stroke-width="18"/>
<path d="M922.0 205.0 C924.3 206.8 932.7 212.2 936.0 216.0 C939.3 219.8 941.3 223.5 942.0 228.0 C942.7 232.5 940.3 240.5 940.0 243.0 " stroke-width="18"/>
<path d="M993.0 200.0 C992.0 204.2 988.7 217.0 987.0 225.0 C985.3 233.0 984.0 241.8 983.0 248.0 C982.0 254.2 981.3 259.7 981.0 262.0 " stroke-width="17"/>
<path d="M872.0 258.0 C875.0 259.3 882.5 263.0 890.0 266.0 C897.5 269.0 912.5 274.3 917.0 276.0 " stroke-width="19"/>
<path d="M935.0 180.0 C936.7 182.5 943.3 192.5 945.0 195.0 " stroke-width="16"/>
<path d="M900.0 225.0 C902.5 226.7 912.5 233.3 915.0 235.0 " stroke-width="16"/>
<path d="M997.0 285.0 C997.3 287.5 998.7 297.5 999.0 300.0 " stroke-width="16"/>
<path d="M851.0 305.0 C855.8 306.7 870.7 311.8 880.0 315.0 C889.3 318.2 902.5 322.5 907.0 324.0 " stroke-width="19"/>
<path d="M846.0 357.0 C848.3 357.2 855.3 357.7 860.0 358.0 C864.7 358.3 871.7 358.8 874.0 359.0 " stroke-width="18"/>
<path d="M890.0 380.0 C892.7 383.0 900.7 392.0 906.0 398.0 C911.3 404.0 919.3 413.0 922.0 416.0 " stroke-width="16"/>
<path d="M905.0 372.0 C909.2 375.8 925.8 391.2 930.0 395.0 " stroke-width="15"/>
<path d="M839.0 411.0 C845.8 412.0 866.5 414.8 880.0 417.0 C893.5 419.2 913.3 422.8 920.0 424.0 " stroke-width="18"/>
<path d="M845.0 452.0 C849.5 452.5 863.2 454.0 872.0 455.0 C880.8 456.0 893.7 457.5 898.0 458.0 " stroke-width="18"/>
<path d="M854.0 483.0 C858.3 483.2 871.1 483.5 880.0 484.0 C888.9 484.5 902.9 485.7 907.5 486.0 " stroke-width="19"/>
<path d="M870.0 517.5 C873.3 517.8 883.2 518.5 890.0 519.0 C896.8 519.5 907.2 520.3 910.6 520.6 " stroke-width="19"/>
<path d="M920.0 524.0 C921.0 526.7 923.9 534.8 926.0 540.0 C928.1 545.2 931.4 552.5 932.5 555.0 " stroke-width="19"/>
<path d="M954.0 567.5 C955.8 568.1 961.3 569.9 965.0 571.0 C968.7 572.1 974.2 573.5 976.0 574.0 " stroke-width="18"/>
<path d="M900.0 560.0 C902.5 562.5 912.5 572.5 915.0 575.0 " stroke-width="16"/>
<path d="M985.0 585.0 C987.5 585.8 997.5 589.2 1000.0 590.0 " stroke-width="16"/>
<path d="M1151.5 361.4 C1153.8 361.7 1160.8 362.4 1165.0 363.0 C1169.2 363.6 1175.0 364.7 1177.0 365.0 " stroke-width="18"/>
<path d="M1112.4 383.0 C1113.2 384.7 1115.4 389.4 1117.0 393.0 C1118.6 396.6 1121.2 402.5 1122.0 404.4 " stroke-width="17"/>
<path d="M1104.0 420.0 C1110.0 417.5 1127.2 409.7 1140.0 405.0 C1152.8 400.3 1174.0 394.2 1180.8 392.0 " stroke-width="15"/>
<path d="M1099.0 430.0 C1106.2 431.2 1128.0 435.2 1142.0 437.0 C1156.0 438.8 1176.2 440.3 1183.0 441.0 " stroke-width="20"/>
<path d="M1117.0 483.0 C1121.7 484.5 1135.7 488.8 1145.0 492.0 C1154.3 495.2 1168.3 500.3 1173.0 502.0 " stroke-width="19"/>
<path d="M1110.6 514.0 C1115.0 515.0 1128.1 517.8 1137.0 520.0 C1145.9 522.2 1159.5 525.8 1164.0 527.0 " stroke-width="19"/>
<path d="M1089.0 536.0 C1089.5 539.2 1091.0 548.7 1092.0 555.0 C1093.0 561.3 1094.5 570.8 1095.0 574.0 " stroke-width="19"/>
<path d="M1039.0 564.0 C1041.2 564.8 1047.8 567.3 1052.0 569.0 C1056.2 570.7 1062.0 573.2 1064.0 574.0 " stroke-width="18"/>
<path d="M1120.0 560.0 C1124.2 558.0 1140.8 550.0 1145.0 548.0 " stroke-width="17"/>
<path d="M1075.0 590.0 C1078.3 589.2 1091.7 585.8 1095.0 585.0 " stroke-width="16"/>
<path d="M989.0 458.0 C992.8 457.5 1003.7 454.5 1012.0 455.0 C1020.3 455.5 1034.5 460.0 1039.0 461.0 " stroke-width="16"/>
<path d="M989.0 480.0 C992.8 479.7 1003.7 477.8 1012.0 478.0 C1020.3 478.2 1034.5 480.5 1039.0 481.0 " stroke-width="16"/>
<path d="M1075.0 300.0 C1077.5 303.0 1087.5 315.0 1090.0 318.0 " stroke-width="16"/>
<path d="M1040.0 300.0 C1043.3 301.7 1056.7 308.3 1060.0 310.0 " stroke-width="15"/>
<ellipse cx="972.0" cy="511.0" rx="17" ry="14" transform="rotate(35 972.0 511.0)" stroke-width="11"/>
<ellipse cx="1046.0" cy="519.0" rx="17" ry="14" transform="rotate(-35 1046.0 519.0)" stroke-width="11"/>
</g>
<g filter="url(#f25)" stroke="#454545" stroke-linecap="round" stroke-linejoin="round" fill="none">
<path d="M965.6 176.0 C965.2 178.3 963.6 185.7 963.0 190.0 C962.4 194.3 961.9 200.0 961.7 202.0 " stroke-width="9"/>
<path d="M922.0 205.0 C924.3 206.8 932.7 212.2 936.0 216.0 C939.3 219.8 941.3 223.5 942.0 228.0 C942.7 232.5 940.3 240.5 940.0 243.0 " stroke-width="9"/>
<path d="M993.0 200.0 C992.0 204.2 988.7 217.0 987.0 225.0 C985.3 233.0 984.0 241.8 983.0 248.0 C982.0 254.2 981.3 259.7 981.0 262.0 " stroke-width="8"/>
<path d="M872.0 258.0 C875.0 259.3 882.5 263.0 890.0 266.0 C897.5 269.0 912.5 274.3 917.0 276.0 " stroke-width="10"/>
<path d="M935.0 180.0 C936.7 182.5 943.3 192.5 945.0 195.0 " stroke-width="7"/>
<path d="M900.0 225.0 C902.5 226.7 912.5 233.3 915.0 235.0 " stroke-width="7"/>
<path d="M997.0 285.0 C997.3 287.5 998.7 297.5 999.0 300.0 " stroke-width="7"/>
<path d="M851.0 305.0 C855.8 306.7 870.7 311.8 880.0 315.0 C889.3 318.2 902.5 322.5 907.0 324.0 " stroke-width="10"/>
<path d="M846.0 357.0 C848.3 357.2 855.3 357.7 860.0 358.0 C864.7 358.3 871.7 358.8 874.0 359.0 " stroke-width="9"/>
<path d="M890.0 380.0 C892.7 383.0 900.7 392.0 906.0 398.0 C911.3 404.0 919.3 413.0 922.0 416.0 " stroke-width="7"/>
<path d="M905.0 372.0 C909.2 375.8 925.8 391.2 930.0 395.0 " stroke-width="6"/>
<path d="M839.0 411.0 C845.8 412.0 866.5 414.8 880.0 417.0 C893.5 419.2 913.3 422.8 920.0 424.0 " stroke-width="9"/>
<path d="M845.0 452.0 C849.5 452.5 863.2 454.0 872.0 455.0 C880.8 456.0 893.7 457.5 898.0 458.0 " stroke-width="9"/>
<path d="M854.0 483.0 C858.3 483.2 871.1 483.5 880.0 484.0 C888.9 484.5 902.9 485.7 907.5 486.0 " stroke-width="10"/>
<path d="M870.0 517.5 C873.3 517.8 883.2 518.5 890.0 519.0 C896.8 519.5 907.2 520.3 910.6 520.6 " stroke-width="10"/>
<path d="M920.0 524.0 C921.0 526.7 923.9 534.8 926.0 540.0 C928.1 545.2 931.4 552.5 932.5 555.0 " stroke-width="10"/>
<path d="M954.0 567.5 C955.8 568.1 961.3 569.9 965.0 571.0 C968.7 572.1 974.2 573.5 976.0 574.0 " stroke-width="9"/>
<path d="M900.0 560.0 C902.5 562.5 912.5 572.5 915.0 575.0 " stroke-width="7"/>
<path d="M985.0 585.0 C987.5 585.8 997.5 589.2 1000.0 590.0 " stroke-width="7"/>
<path d="M1151.5 361.4 C1153.8 361.7 1160.8 362.4 1165.0 363.0 C1169.2 363.6 1175.0 364.7 1177.0 365.0 " stroke-width="9"/>
<path d="M1112.4 383.0 C1113.2 384.7 1115.4 389.4 1117.0 393.0 C1118.6 396.6 1121.2 402.5 1122.0 404.4 " stroke-width="8"/>
<path d="M1104.0 420.0 C1110.0 417.5 1127.2 409.7 1140.0 405.0 C1152.8 400.3 1174.0 394.2 1180.8 392.0 " stroke-width="6"/>
<path d="M1099.0 430.0 C1106.2 431.2 1128.0 435.2 1142.0 437.0 C1156.0 438.8 1176.2 440.3 1183.0 441.0 " stroke-width="11"/>
<path d="M1117.0 483.0 C1121.7 484.5 1135.7 488.8 1145.0 492.0 C1154.3 495.2 1168.3 500.3 1173.0 502.0 " stroke-width="10"/>
<path d="M1110.6 514.0 C1115.0 515.0 1128.1 517.8 1137.0 520.0 C1145.9 522.2 1159.5 525.8 1164.0 527.0 " stroke-width="10"/>
<path d="M1089.0 536.0 C1089.5 539.2 1091.0 548.7 1092.0 555.0 C1093.0 561.3 1094.5 570.8 1095.0 574.0 " stroke-width="10"/>
<path d="M1039.0 564.0 C1041.2 564.8 1047.8 567.3 1052.0 569.0 C1056.2 570.7 1062.0 573.2 1064.0 574.0 " stroke-width="9"/>
<path d="M1120.0 560.0 C1124.2 558.0 1140.8 550.0 1145.0 548.0 " stroke-width="8"/>
<path d="M1075.0 590.0 C1078.3 589.2 1091.7 585.8 1095.0 585.0 " stroke-width="7"/>
<path d="M989.0 458.0 C992.8 457.5 1003.7 454.5 1012.0 455.0 C1020.3 455.5 1034.5 460.0 1039.0 461.0 " stroke-width="7"/>
<path d="M989.0 480.0 C992.8 479.7 1003.7 477.8 1012.0 478.0 C1020.3 478.2 1034.5 480.5 1039.0 481.0 " stroke-width="7"/>
<path d="M1075.0 300.0 C1077.5 303.0 1087.5 315.0 1090.0 318.0 " stroke-width="7"/>
<path d="M1040.0 300.0 C1043.3 301.7 1056.7 308.3 1060.0 310.0 " stroke-width="6"/>
<ellipse cx="972.0" cy="511.0" rx="17" ry="14" transform="rotate(35 972.0 511.0)" stroke-width="4"/>
<ellipse cx="1046.0" cy="519.0" rx="17" ry="14" transform="rotate(-35 1046.0 519.0)" stroke-width="4"/>
</g>
<g filter="url(#f25)" fill="#404040">
<ellipse cx="985.0" cy="250.0" rx="7" ry="10"/>
<ellipse cx="996.0" cy="292.0" rx="6" ry="8"/>
<ellipse cx="1152.0" cy="362.0" rx="6" ry="5"/>
</g>
<g filter="url(#f4)" fill="none" stroke="#6e6e6e" stroke-width="7"><path d="M968 325 C962 350 962 380 950 420"/><path d="M1058 325 C1062 350 1064 380 1075 420"/></g>
</g>
<path d="M1012 449 L1011.5 470 L1011 597" stroke="#0a0a0a" stroke-width="4" filter="url(#f1)"/><ellipse cx="1012" cy="452" rx="4" ry="5" fill="#0a0a0a" filter="url(#f1)"/>
<path d="M1012 170 L1012 205" stroke="#1a1a1a" stroke-width="3" filter="url(#f1)"/>
<path d="M976.5 319.8 C978.8 320.8 984.0 326.3 988.0 331.0 C992.0 335.7 997.8 343.2 1000.4 348.0 C1003.0 352.8 1003.3 354.2 1003.8 360.0 C1004.3 365.8 1004.7 376.2 1003.3 383.0 C1001.9 389.8 999.1 395.1 995.6 401.0 C992.1 406.9 986.4 412.8 982.2 418.6 C978.0 424.4 973.9 431.4 970.5 436.0 C967.1 440.6 964.6 444.1 962.0 446.0 C959.4 447.9 956.8 448.8 955.0 447.5 C953.2 446.2 951.3 442.8 951.5 438.0 C951.7 433.2 954.1 424.8 956.4 418.6 C958.7 412.4 962.3 406.9 965.2 401.0 C968.1 395.1 971.8 390.2 974.0 383.4 C976.2 376.6 978.1 366.9 978.7 360.0 C979.3 353.1 978.2 347.5 977.5 341.7 C976.8 335.9 974.6 328.6 974.4 325.0 C974.2 321.4 974.2 318.8 976.5 319.8 Z" fill="#0a0a0a" filter="url(#f1)"/>
<path d="M1050.4 319.8 C1048.0 320.8 1042.2 326.7 1038.0 331.0 C1033.8 335.3 1028.3 341.0 1025.4 345.8 C1022.5 350.6 1021.4 353.7 1020.8 360.0 C1020.2 366.3 1020.6 376.6 1022.0 383.4 C1023.4 390.2 1025.9 395.1 1029.0 401.0 C1032.1 406.9 1036.8 412.8 1040.7 418.6 C1044.6 424.4 1049.0 431.4 1052.5 436.0 C1056.0 440.6 1059.4 444.1 1062.0 446.0 C1064.6 447.9 1066.3 448.8 1068.0 447.5 C1069.7 446.2 1072.6 442.8 1072.0 438.0 C1071.4 433.2 1066.9 424.8 1064.2 418.6 C1061.5 412.4 1058.5 406.9 1056.0 401.0 C1053.5 395.1 1051.1 390.2 1049.5 383.4 C1047.9 376.6 1046.6 366.9 1046.6 360.0 C1046.6 353.1 1048.4 347.5 1049.4 341.7 C1050.4 335.9 1052.3 328.6 1052.5 325.0 C1052.7 321.4 1052.8 318.8 1050.4 319.8 Z" fill="#0a0a0a" filter="url(#f1)"/>
<g filter="url(#f4)" fill="#606060">
<ellipse cx="1048" cy="200" rx="9" ry="7"/>
<ellipse cx="1085" cy="222" rx="7" ry="8"/>
<ellipse cx="1112" cy="290" rx="10" ry="7"/>
<ellipse cx="1128" cy="330" rx="7" ry="6"/>
<ellipse cx="1040" cy="285" rx="8" ry="8"/>
</g>
<path d="M1022.0 163.0 L1030.0 159.0 L1058.0 159.0 L1071.0 169.5 L1095.0 181.0 L1114.0 195.0 L1130.0 209.0 L1146.0 228.0 L1157.0 252.0 L1167.0 271.0 L1175.0 291.0 L1177.0 307.0 L1181.0 322.0 L1190.0 346.0 L1190.0 369.0 L1177.0 361.0 L1167.0 340.0 L1151.0 342.0 L1138.0 340.0 L1122.0 324.0 L1118.0 307.0 L1130.0 303.0 L1141.0 303.0 L1138.0 295.0 L1126.0 283.0 L1108.5 271.0 L1108.5 255.5 L1120.0 247.6 L1102.7 241.8 L1110.5 224.0 L1102.7 218.4 L1091.0 210.5 L1087.0 234.0 L1075.0 234.0 L1069.5 216.0 L1069.5 194.0 L1054.0 191.0 L1040.0 179.0 L1035.0 177.0 L1035.0 199.0 L1044.0 212.5 L1050.0 224.0 L1050.0 247.6 L1044.0 259.4 L1032.0 271.0 L1028.0 300.0 L1015.0 300.0 L1013.0 250.0 L1013.0 199.0 L1017.0 191.0 Z" fill="#7e7e7e" shape-rendering="crispEdges"/>
<clipPath id="wc"><path d="M1011.0 171.5 C1007.1 169.2 1001.1 165.0 992.9 164.5 C984.7 164.0 971.2 165.5 961.7 168.5 C952.1 171.6 943.0 178.2 935.5 182.6 C927.9 186.9 922.4 190.1 916.3 194.7 C910.3 199.2 904.4 204.7 899.2 209.7 C894.0 214.8 889.3 218.8 885.1 224.8 C880.9 230.8 877.8 238.7 874.0 245.9 C870.1 253.1 865.5 260.0 861.8 268.1 C858.1 276.1 855.0 285.0 851.7 294.2 C848.4 303.5 845.0 313.5 842.1 323.5 C839.2 333.4 836.5 343.8 834.5 353.7 C832.6 363.6 831.3 373.2 830.5 382.9 C829.7 392.7 829.5 402.6 829.5 412.2 C829.5 421.8 829.5 431.0 830.6 440.4 C831.6 449.8 832.9 458.7 835.6 468.6 C838.3 478.5 842.0 489.9 846.8 499.8 C851.5 509.7 857.5 519.1 863.9 528.0 C870.3 536.9 876.9 545.0 885.1 553.2 C893.3 561.4 903.9 570.1 913.3 577.3 C922.7 584.5 932.1 591.6 941.5 596.4 C950.9 601.3 961.0 605.0 969.7 606.5 C978.4 608.0 987.5 607.0 993.9 605.5 C1000.3 604.0 1005.0 598.8 1008.0 597.5 C1011.0 596.2 1010.2 596.5 1012.0 597.5 C1013.9 598.5 1014.4 601.2 1019.1 603.5 C1023.8 605.8 1031.0 611.3 1040.2 611.5 C1049.4 611.6 1062.7 608.3 1074.4 604.4 C1086.2 600.6 1099.6 594.7 1110.7 588.3 C1121.8 582.0 1132.7 574.4 1140.9 566.2 C1149.1 558.0 1153.7 549.0 1160.1 539.1 C1166.5 529.2 1174.4 517.4 1179.2 506.9 C1184.1 496.3 1187.1 486.7 1189.4 475.6 C1191.6 464.6 1191.8 453.0 1192.4 440.4 C1193.1 427.8 1193.7 412.0 1193.5 400.1 C1193.3 388.2 1192.8 378.1 1191.5 368.8 C1190.1 359.6 1188.1 352.5 1185.5 344.6 C1182.8 336.7 1177.9 328.1 1175.4 321.4 C1172.9 314.7 1172.2 310.0 1170.3 304.3 C1168.5 298.6 1166.8 293.4 1164.2 287.2 C1161.7 281.0 1158.2 273.7 1155.1 267.0 C1152.1 260.3 1149.4 253.3 1146.0 246.9 C1142.7 240.5 1139.1 234.5 1134.9 228.8 C1130.7 223.1 1125.7 217.6 1120.8 212.7 C1115.9 207.9 1111.0 203.8 1105.7 199.7 C1100.3 195.5 1095.1 191.6 1088.5 187.6 C1082.0 183.6 1072.4 179.2 1066.4 175.5 C1060.3 171.9 1057.8 167.4 1052.3 165.5 C1046.7 163.7 1038.2 164.0 1033.1 164.5 C1028.1 165.0 1024.9 166.2 1022.1 168.5 C1019.2 170.8 1017.9 178.0 1016.0 178.5 C1014.2 179.0 1014.9 173.8 1011.0 171.5 Z"/></clipPath>
<g clip-path="url(#mc)"><g clip-path="url(#wc)">
<path d="M1011.0 171.5 C1007.1 169.2 1001.1 165.0 992.9 164.5 C984.7 164.0 971.2 165.5 961.7 168.5 C952.1 171.6 943.0 178.2 935.5 182.6 C927.9 186.9 922.4 190.1 916.3 194.7 C910.3 199.2 904.4 204.7 899.2 209.7 C894.0 214.8 889.3 218.8 885.1 224.8 C880.9 230.8 877.8 238.7 874.0 245.9 C870.1 253.1 865.5 260.0 861.8 268.1 C858.1 276.1 855.0 285.0 851.7 294.2 C848.4 303.5 845.0 313.5 842.1 323.5 C839.2 333.4 836.5 343.8 834.5 353.7 C832.6 363.6 831.3 373.2 830.5 382.9 C829.7 392.7 829.5 402.6 829.5 412.2 C829.5 421.8 829.5 431.0 830.6 440.4 C831.6 449.8 832.9 458.7 835.6 468.6 C838.3 478.5 842.0 489.9 846.8 499.8 C851.5 509.7 857.5 519.1 863.9 528.0 C870.3 536.9 876.9 545.0 885.1 553.2 C893.3 561.4 903.9 570.1 913.3 577.3 C922.7 584.5 932.1 591.6 941.5 596.4 C950.9 601.3 961.0 605.0 969.7 606.5 C978.4 608.0 987.5 607.0 993.9 605.5 C1000.3 604.0 1005.0 598.8 1008.0 597.5 C1011.0 596.2 1010.2 596.5 1012.0 597.5 C1013.9 598.5 1014.4 601.2 1019.1 603.5 C1023.8 605.8 1031.0 611.3 1040.2 611.5 C1049.4 611.6 1062.7 608.3 1074.4 604.4 C1086.2 600.6 1099.6 594.7 1110.7 588.3 C1121.8 582.0 1132.7 574.4 1140.9 566.2 C1149.1 558.0 1153.7 549.0 1160.1 539.1 C1166.5 529.2 1174.4 517.4 1179.2 506.9 C1184.1 496.3 1187.1 486.7 1189.4 475.6 C1191.6 464.6 1191.8 453.0 1192.4 440.4 C1193.1 427.8 1193.7 412.0 1193.5 400.1 C1193.3 388.2 1192.8 378.1 1191.5 368.8 C1190.1 359.6 1188.1 352.5 1185.5 344.6 C1182.8 336.7 1177.9 328.1 1175.4 321.4 C1172.9 314.7 1172.2 310.0 1170.3 304.3 C1168.5 298.6 1166.8 293.4 1164.2 287.2 C1161.7 281.0 1158.2 273.7 1155.1 267.0 C1152.1 260.3 1149.4 253.3 1146.0 246.9 C1142.7 240.5 1139.1 234.5 1134.9 228.8 C1130.7 223.1 1125.7 217.6 1120.8 212.7 C1115.9 207.9 1111.0 203.8 1105.7 199.7 C1100.3 195.5 1095.1 191.6 1088.5 187.6 C1082.0 183.6 1072.4 179.2 1066.4 175.5 C1060.3 171.9 1057.8 167.4 1052.3 165.5 C1046.7 163.7 1038.2 164.0 1033.1 164.5 C1028.1 165.0 1024.9 166.2 1022.1 168.5 C1019.2 170.8 1017.9 178.0 1016.0 178.5 C1014.2 179.0 1014.9 173.8 1011.0 171.5 Z" fill="#cdcdcd"/>
<g filter="url(#f4)" stroke-linecap="round" fill="none">
<path d="M1030 174 C1060 170 1080 180 1100 196 C1125 216 1140 242 1152 272 C1162 300 1170 325 1180 352" stroke="#e6e6e6" stroke-width="12"/>
<path d="M1026 185 L1027 292 M1125 308 L1172 338 M1050 175 L1062 190" stroke="#e2e2e2" stroke-width="10"/>
<path d="M1016 238 L1046 234 M1016 266 L1040 262 M1016 212 L1036 214 M1118 254 L1140 262 M1142 330 L1172 344 M1082 200 L1100 188 M1062 182 L1052 172 M1120 228 L1140 222" stroke="#a2a2a2" stroke-width="5"/>
</g>
</g></g>
</svg><!--/BRAIN-->
<div class="t" style="left:668px;top:641px;font-family:'Liberation Serif',serif;font-size:14px;color:#f0f0f0;letter-spacing:0.48px">F: Frontal_Lobe_thr_40_L_mask (40%)</div>
<div class="t" style="left:668px;top:657px;font-family:'Liberation Serif',serif;font-size:14px;color:#f0f0f0;letter-spacing:0.43px">B: MNI152_T1_1mm_brain</div>


<!-- ============ BOTTOM STRIP ============ -->
<div class="a" style="left:1333px;top:695px;width:32px;height:31px;border:1px solid #c8c8c8;border-radius:3px;background:#fafafa"></div>
<svg style="left:1338px;top:699px" width="22" height="22" viewBox="0 0 22 22"><circle cx="11" cy="11" r="11" fill="#a3a3a3"/><path d="M6 6 L16 16 M16 6 L6 16" stroke="#fff" stroke-width="2"/></svg>

<!-- ============ TASKBAR ============ -->
<div class="a" style="left:0;top:728px;width:1366px;height:40px;background:#0d172f"></div>
<!-- windows logo -->
<svg style="left:16px;top:740px" width="16" height="16" viewBox="0 0 16 16"><path d="M0 2.2 L6.5 1.3 L6.5 7.5 L0 7.5 Z M7.5 1.1 L16 0 L16 7.5 L7.5 7.5 Z M0 8.5 L6.5 8.5 L6.5 14.7 L0 13.8 Z M7.5 8.5 L16 8.5 L16 16 L7.5 14.9 Z" fill="#fff"/></svg>
<!-- search box -->
<div class="a" style="left:48px;top:728px;width:344px;height:40px;background:#f1f1f1;border-top:1px solid #c5c5c5"></div>
<div class="a" style="left:57.5px;top:737.5px;width:21px;height:21px;border-radius:50%;border:3px solid #0a0a0a"></div>
<div class="t" style="left:88px;top:741px;font-size:15px;color:#333;letter-spacing:-0.29px">Type here to search</div>
<svg style="left:365px;top:740px" width="12" height="17" viewBox="0 0 12 17"><rect x="3.5" y="0.7" width="5" height="10" rx="2.5" fill="none" stroke="#222" stroke-width="1.2"/><path d="M1 7 C1 13 11 13 11 7 M6 12 L6 15.5 M3 15.5 L9 15.5" fill="none" stroke="#222" stroke-width="1.2"/></svg>
<!-- task view -->
<svg style="left:408px;top:740px" width="17" height="15" viewBox="0 0 17 15"><rect x="1.5" y="3" width="9" height="9" fill="none" stroke="#fff" stroke-width="1.3"/><path d="M0 0.7 L12 0.7 M0 14.3 L12 14.3 M14.5 0 L14.5 15 M13 4 L16 4 M13 7.5 L16 7.5" stroke="#fff" stroke-width="1.2"/></svg>
<!-- edge -->
<svg style="left:457px;top:737px" width="21" height="21" viewBox="0 0 21 21"><path d="M2 11 C2 3 10 0 15 2 C19 4 20 8 20 12 L7 12 C7 17 14 19 19 16 L19 20 C13 22 2 21 2 11 Z M7 9 L14 9 C14 5 7 5 7 9 Z" fill="#1e7fd8"/></svg>
<!-- explorer -->
<svg style="left:505px;top:738px" width="22" height="20" viewBox="0 0 22 20"><path d="M0 2 L8 2 L10 4 L22 4 L22 19 L0 19 Z" fill="#e8b540"/><path d="M0 6 L22 6 L22 19 L0 19 Z" fill="#f8d878"/><path d="M5 13 L17 13 L17 15 L14 15 L14 20 L8 20 L8 15 L5 15 Z" fill="#2a90d8"/></svg>
<!-- opera -->
<svg style="left:554px;top:737px" width="22" height="22" viewBox="0 0 22 22"><defs><linearGradient id="op" x1="0" y1="0" x2="0" y2="1"><stop offset="0" stop-color="#ff3a3a"/><stop offset="1" stop-color="#a00a1a"/></linearGradient></defs><ellipse cx="11" cy="11" rx="11" ry="11" fill="url(#op)"/><ellipse cx="11" cy="11" rx="4" ry="8" fill="#3a0508"/><ellipse cx="11" cy="11" rx="2.6" ry="7" fill="#0d172f"/></svg>
<!-- chrome -->
<svg style="left:603px;top:737px" width="22" height="22" viewBox="0 0 22 22"><circle cx="11" cy="11" r="11" fill="#db4437"/><path d="M11 11 L1.5 5.5 A11 11 0 0 0 11 22 Z" fill="#0f9d58"/><path d="M11 11 L11 22 A11 11 0 0 0 20.5 5.5 Z" fill="#f4b400"/><path d="M11 11 L20.5 5.5 L11 5.5 Z" fill="#db4437"/><path d="M11 11 L1.5 5.5 L6 13.5 Z" fill="#0f9d58"/><circle cx="11" cy="11" r="5" fill="#fff"/><circle cx="11" cy="11" r="4" fill="#4285f4"/></svg>
<!-- matlab -->
<svg style="left:651px;top:737px" width="24" height="22" viewBox="0 0 24 22"><path d="M0 12 L6 9 L9 11 L6 15 Z" fill="#3a8ad0"/><path d="M6 9 L15 0 L24 21 C21 18 19 16 17 14 C13 17 9 20 6 15 Z" fill="#e86a1a"/><path d="M6 9 L15 0 L12 10 Z" fill="#f0a040"/></svg>
<!-- ldoce -->
<svg style="left:699px;top:736px" width="25" height="24" viewBox="0 0 25 24"><rect x="0" y="0" width="25" height="24" fill="#1d3fa8"/><rect x="0" y="10" width="25" height="7" fill="#e0141c"/><rect x="0" y="17" width="25" height="7" fill="#f8d010"/><path d="M8 21 L18 21 L17 17 L8 17 Z M11 9 L11 17 M14 8 L14 17 M9 12 L16 12 M9 14.5 L16 14.5" stroke="#fff" stroke-width="1.2" fill="none"/><text x="12.5" y="7.5" font-family="Liberation Sans" font-size="6.5" font-weight="bold" fill="#fff" text-anchor="middle" textLength="21" lengthAdjust="spacingAndGlyphs">LDOCE</text></svg>
<!-- slicer active -->
<div class="a" style="left:737px;top:728px;width:44px;height:40px;background:#3d4555"></div><div class="a" style="left:781px;top:728px;width:4px;height:40px;background:#2c3344"></div>
<svg style="left:748px;top:735px" width="25" height="25" viewBox="0 0 25 25"><use href="#slc" x="0" y="0" width="25" height="25"/></svg>
<!-- word -->
<svg style="left:799px;top:736px" width="23" height="23" viewBox="0 0 23 23"><rect x="9" y="3" width="14" height="17" fill="#fff"/><path d="M12 6 L21 6 M12 9 L21 9 M12 12 L21 12 M12 15 L21 15" stroke="#2b579a" stroke-width="1.2"/><path d="M0 2.5 L13 0 L13 23 L0 20.5 Z" fill="#2b579a"/><text x="6.5" y="15" font-family="Liberation Sans" font-size="9" font-weight="bold" fill="#fff" text-anchor="middle">W</text></svg>
<!-- vscode -->
<svg style="left:847px;top:736px" width="24" height="24" viewBox="0 0 24 24"><path d="M17 0 L24 3 L24 21 L17 24 L4 13 L1 15.5 L0 14 L0 10 L1 8.5 L4 11 Z M17 6 L9 12 L17 18 Z" fill="#1f8ad8"/><path d="M0 10 L1 8.5 L17 21 L17 24 Z" fill="#0e60a8"/></svg>
<!-- skype -->
<svg style="left:896px;top:737px" width="23" height="23" viewBox="0 0 23 23"><circle cx="6" cy="6" r="6" fill="#16a8ef"/><circle cx="17" cy="17" r="6" fill="#16a8ef"/><circle cx="11.5" cy="11.5" r="10" fill="#16a8ef"/><text x="11.5" y="16.5" font-family="Liberation Sans" font-size="14" font-weight="bold" fill="#fff" text-anchor="middle">S</text></svg>
<!-- paint -->
<svg style="left:945px;top:736px" width="24" height="23" viewBox="0 0 24 23"><ellipse cx="10" cy="13" rx="10" ry="8" fill="#d8e4f0"/><circle cx="5" cy="12" r="2" fill="#e83a3a"/><circle cx="7" cy="8" r="2" fill="#4ab84a"/><circle cx="12" cy="7" r="2" fill="#f0c030"/><circle cx="9" cy="16" r="1.8" fill="#1a2a4a"/><path d="M11 20 L21 4" stroke="#f09030" stroke-width="2"/><path d="M20 5 L23 0" stroke="#d8b890" stroke-width="2.5"/></svg>
<!-- underlines -->
<div class="ul" style="left:496px;width:40px"></div>
<div class="ul" style="left:545px;width:40px"></div>
<div class="ul" style="left:594px;width:40px"></div>
<div class="ul" style="left:643px;width:40px"></div>
<div class="ul" style="left:691px;width:41px"></div>
<div class="ul" style="left:737px;width:48px"></div>
<div class="ul" style="left:790px;width:40px"></div>
<div class="ul" style="left:839px;width:40px"></div>
<div class="ul" style="left:888px;width:40px"></div>
<div class="ul" style="left:937px;width:40px"></div>
<!-- tray -->
<svg style="left:1085px;top:739px" width="17" height="17" viewBox="0 0 17 17"><circle cx="5" cy="8" r="2.6" fill="none" stroke="#fff" stroke-width="1.1"/><path d="M0.8 16 C0.8 12 2.5 11 5 11 C7.5 11 9.2 12 9.2 16" fill="none" stroke="#fff" stroke-width="1.1"/><circle cx="11" cy="4" r="2.6" fill="none" stroke="#fff" stroke-width="1.1"/><path d="M8 9 C9 7.5 10 7 11 7 C13.5 7 15.5 8 15.5 12" fill="none" stroke="#fff" stroke-width="1.1"/></svg>
<svg style="left:1123px;top:744px" width="13" height="8" viewBox="0 0 13 8"><path d="M0.7 7.3 L6.5 1.2 L12.3 7.3" fill="none" stroke="#fff" stroke-width="1.2"/></svg>
<svg style="left:1146px;top:744px" width="16" height="10" viewBox="0 0 16 10"><rect x="0.6" y="0.6" width="13" height="8.8" fill="none" stroke="#fff" stroke-width="1.2"/><rect x="2.5" y="2.5" width="8" height="5" fill="#fff"/><rect x="14" y="3" width="1.8" height="4" fill="#fff"/></svg>
<svg style="left:1172px;top:743px" width="14" height="13" viewBox="0 0 14 13"><path d="M1 12 A11 11 0 0 1 12 1 M3.5 12 A8.5 8.5 0 0 1 12 3.5 M6 12 A6 6 0 0 1 12 6 M8.5 12 A3.5 3.5 0 0 1 12 8.5" fill="none" stroke="#fff" stroke-width="1" opacity="0.9"/><circle cx="12" cy="11.5" r="1.6" fill="#fff"/></svg>
<svg style="left:1193px;top:743px" width="16" height="13" viewBox="0 0 16 13"><path d="M0.6 4 L3 4 L7 0.8 L7 12.2 L3 9 L0.6 9 Z" fill="none" stroke="#fff" stroke-width="1.1"/><path d="M10 4.5 L14 8.5 M14 4.5 L10 8.5" stroke="#fff" stroke-width="1.1"/></svg>
<div class="t" style="left:1219px;top:743px;font-size:11px;color:#fff">ENG</div>
<div class="t" style="left:1260px;top:733px;font-size:12px;color:#fff;letter-spacing:-0.28px">2:32 PM</div>
<div class="t" style="left:1255px;top:751px;font-size:12px;color:#fff;letter-spacing:-0.14px">7/20/2018</div>
<svg style="left:1325px;top:740px" width="25" height="25" viewBox="0 0 25 25"><path d="M0.5 0.5 L16.5 0.5 L16.5 12 L6 12 L2.5 15 L2.5 12 L0.5 12 Z" fill="#fff"/><path d="M3 3.5 L14 3.5 M3 6 L14 6 M3 8.5 L14 8.5" stroke="#0d172f" stroke-width="1"/><circle cx="17" cy="17" r="7.5" fill="#2a2f38" stroke="#5a5f68" stroke-width="1"/><text x="17" y="21" font-family="Liberation Sans" font-size="11" fill="#fff" text-anchor="middle">4</text></svg>

</body></html>
